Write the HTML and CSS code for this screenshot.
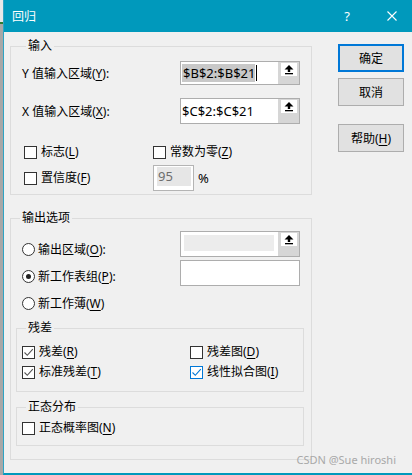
FILE: index.html
```html
<!DOCTYPE html>
<html lang="zh">
<head>
    <meta charset="UTF-8">
    <title>回归</title>
    <link rel="stylesheet" href="styles.css">
</head>
<body>
<div class="screen">
    <div class="backdrop"></div>
    <div class="dialog">
        <!-- Title bar -->
        <div class="titlebar">
            <span class="title">回归</span>
            <span class="help">?</span>
            <svg class="close" width="10" height="10" viewBox="0 0 10 10">
                <path d="M0.5 0.5 L9.5 9.5 M9.5 0.5 L0.5 9.5" stroke="#fff" stroke-width="1.1" fill="none"/>
            </svg>
        </div>

        <div class="content">
            <div class="groups">
                <!-- 输入 -->
                <fieldset class="group input-group">
                    <legend>输入</legend>
                    <div class="field-row first">
                        <span class="label">Y 值输入区域(<u>Y</u>):</span>
                        <div class="ref-box">
                            <div class="ref-field"><span class="selected">$B$2:$B$21</span><span class="caret"></span></div>
                            <div class="ref-btn"><span class="ref-icon"><svg width="16" height="13" viewBox="0 0 16 13"><path d="M8 2 L3.5 6.5 H6.8 V9 H9.2 V6.5 H12.5 Z" fill="#000"/><rect x="4" y="10" width="8" height="1.3" fill="#000"/></svg></span></div>
                        </div>
                    </div>
                    <div class="field-row second">
                        <span class="label">X 值输入区域(<u>X</u>):</span>
                        <div class="ref-box tall">
                            <div class="ref-field">$C$2:$C$21</div>
                            <div class="ref-btn"><span class="ref-icon"><svg width="16" height="13" viewBox="0 0 16 13"><path d="M8 2 L3.5 6.5 H6.8 V9 H9.2 V6.5 H12.5 Z" fill="#000"/><rect x="4" y="10" width="8" height="1.3" fill="#000"/></svg></span></div>
                        </div>
                    </div>
                    <div class="check-grid">
                        <div class="check-row"><span class="box"></span>标志(<u>L</u>)</div>
                        <div class="check-row"><span class="box"></span>常数为零(<u>Z</u>)</div>
                        <div class="check-row conf"><span class="box"></span>置信度(<u>F</u>)</div>
                        <div class="conf-value">
                            <div class="num-box"><span>95</span></div>
                            <span class="pct">%</span>
                        </div>
                    </div>
                </fieldset>

                <!-- 输出选项 -->
                <fieldset class="group output-group">
                    <legend>输出选项</legend>
                    <div class="out-row row-a">
                        <div class="radio-row"><span class="radio"></span>输出区域(<u>O</u>):</div>
                        <div class="ref-box tall disabled">
                            <div class="ref-field"><div class="gray-fill"></div></div>
                            <div class="ref-btn"><span class="ref-icon"><svg width="16" height="13" viewBox="0 0 16 13"><path d="M8 2 L3.5 6.5 H6.8 V9 H9.2 V6.5 H12.5 Z" fill="#000"/><rect x="4" y="10" width="8" height="1.3" fill="#000"/></svg></span></div>
                        </div>
                    </div>
                    <div class="out-row row-b">
                        <div class="radio-row"><span class="radio on"></span>新工作表组(<u>P</u>):</div>
                        <div class="plain-box"></div>
                    </div>
                    <div class="out-row row-c">
                        <div class="radio-row"><span class="radio"></span>新工作薄(<u>W</u>)</div>
                    </div>

                    <fieldset class="group sub-group resid">
                        <legend>残差</legend>
                        <div class="sub-grid">
                            <div class="check-row"><span class="box checked"><svg width="11" height="11" viewBox="0 0 11 11"><path d="M1.5 5.5 L4.3 8.3 L9.8 2.2" stroke="#555" stroke-width="1.1" fill="none"/></svg></span>残差(<u>R</u>)</div>
                            <div class="check-row"><span class="box"></span>残差图(<u>D</u>)</div>
                            <div class="check-row"><span class="box checked"><svg width="11" height="11" viewBox="0 0 11 11"><path d="M1.5 5.5 L4.3 8.3 L9.8 2.2" stroke="#555" stroke-width="1.1" fill="none"/></svg></span>标准残差(<u>T</u>)</div>
                            <div class="check-row"><span class="box checked blue"><svg width="11" height="11" viewBox="0 0 11 11"><path d="M1.5 5.5 L4.3 8.3 L9.8 2.2" stroke="#0078d7" stroke-width="1.1" fill="none"/></svg></span>线性拟合图(<u>I</u>)</div>
                        </div>
                    </fieldset>

                    <fieldset class="group sub-group normal">
                        <legend>正态分布</legend>
                        <div class="check-row"><span class="box"></span>正态概率图(<u>N</u>)</div>
                    </fieldset>
                </fieldset>
            </div>

            <!-- 按钮 -->
            <div class="actions">
                <button class="btn default">确定</button>
                <button class="btn">取消</button>
                <button class="btn help-btn">帮助(<u>H</u>)</button>
            </div>
        </div>

        <div class="watermark">CSDN @Sue hiroshi</div>
    </div>
</div>
</body>
</html>
```

FILE: styles.css
```css
* {
    box-sizing: border-box;
}
body {
    margin: 0;
    background: #f0f0f0;
    font-family: "Noto Sans", "Noto Sans CJK SC", sans-serif;
    font-size: 12px;
    color: #000;
    overflow: hidden;
}
u {
    text-decoration-thickness: 1px;
    text-underline-offset: 2px;
}
.screen {
    display: flex;
    width: 412px;
    height: 475px;
}
.backdrop {
    width: 3px;
    background: linear-gradient(#e8e8e8 0, #e8e8e8 22px, #2e7d32 22px, #2e7d32 24px, #a8a8a8 24px);
}
.dialog {
    position: relative;
    flex: 1;
    display: flex;
    flex-direction: column;
    background: #f0f0f0;
    border-left: 1px solid #2ea4c4;
    border-bottom: 2px solid #0099bc;
}

/* title bar */
.titlebar {
    height: 32px;
    flex-shrink: 0;
    display: flex;
    align-items: center;
    padding-left: 8px;
    padding-right: 15px;
    background: #0099bc;
    color: #fff;
}
.title {
    flex: 1;
    font-size: 12px;
}
.help {
    width: 12px;
    text-align: center;
    font-size: 13px;
    margin-right: 34px;
}

/* body */
.content {
    display: flex;
    padding: 6px 0 0 6px;
}
.groups {
    width: 302px;
    display: flex;
    flex-direction: column;
    gap: 15px;
}
.group {
    margin: 0;
    padding: 0;
    border: 1px solid #dcdcdc;
    min-inline-size: 0;
}
.group legend {
    margin-left: 4px;
    padding: 0 2px;
    line-height: 16px;
}

/* 输入 */
.input-group {
    padding: 0 0 3px 11px;
}
.field-row {
    display: grid;
    grid-template-columns: 158px 120px;
    align-items: center;
}
.field-row.first {
    margin-top: 7px;
}
.field-row.second {
    margin-top: 13px;
}
.ref-box {
    display: flex;
    height: 24px;
    border: 1px solid #adadad;
    background: #fff;
}
.ref-box.tall {
    height: 26px;
}
.ref-field {
    flex: 1;
    display: flex;
    align-items: center;
    padding-left: 1px;
    font-size: 13px;
}
.selected {
    background: #c8c8c8;
    padding-left: 1px;
}
.caret {
    width: 1px;
    height: 16px;
    background: #000;
    margin-left: 1px;
}
.ref-btn {
    width: 21px;
    background: #d6d6d6;
    padding: 1px 2px 0 3px;
}
.ref-icon {
    display: block;
    width: 16px;
    height: 13px;
    background: #fff;
}
.ref-icon svg {
    display: block;
}
.check-grid {
    display: grid;
    grid-template-columns: 129px auto;
    padding-left: 2px;
    margin-top: 20px;
    row-gap: 5px;
    align-items: center;
}
.check-row {
    display: flex;
    align-items: center;
    height: 16px;
    line-height: 16px;
}
.box {
    width: 13px;
    height: 13px;
    border: 1px solid #333;
    background: #fff;
    margin-right: 4px;
    flex-shrink: 0;
}
.box svg {
    display: block;
}
.box.blue {
    border-color: #0078d7;
}
.conf-value {
    display: flex;
    align-items: center;
    height: 26px;
}
.num-box {
    width: 41px;
    height: 26px;
    border: 1px solid #b4b4b4;
    background: #fff;
    padding: 1px 2px 4px 3px;
}
.num-box span {
    display: block;
    height: 100%;
    background: #e6e6e6;
    color: #6d6d6d;
    font-size: 13px;
    line-height: 18px;
    padding-left: 1px;
}
.pct {
    margin-left: 4px;
    font-size: 13px;
}

/* 输出选项 */
.output-group {
    padding: 0 0 13px 5px;
}
.out-row {
    display: grid;
    grid-template-columns: 164px 120px;
    align-items: start;
}
.out-row.row-a {
    margin-top: 5px;
}
.out-row.row-a .radio-row {
    margin-top: 10px;
}
.out-row.row-b {
    margin-top: 3px;
}
.out-row.row-b .radio-row {
    margin-top: 8px;
}
.out-row.row-c {
    margin-top: 9px;
}
.radio-row {
    display: flex;
    align-items: center;
    height: 16px;
    padding-left: 6px;
}
.radio {
    width: 13px;
    height: 13px;
    border: 1px solid #333;
    border-radius: 50%;
    background: #fff;
    margin-right: 3px;
    display: flex;
    align-items: center;
    justify-content: center;
}
.radio.on::after {
    content: "";
    width: 5px;
    height: 5px;
    border-radius: 50%;
    background: #222;
}
.ref-box.disabled .ref-field {
    padding: 3px 4px 5px 3px;
}
.gray-fill {
    width: 100%;
    height: 100%;
    background: #ececec;
}
.plain-box {
    height: 26px;
    border: 1px solid #adadad;
    background: #fff;
}

/* 残差 / 正态分布 */
.sub-group {
    width: 288px;
}
.resid {
    margin-top: 9px;
    padding: 0 0 11px 5px;
}
.sub-grid {
    display: grid;
    grid-template-columns: 168px auto;
    row-gap: 4px;
    margin-top: 8px;
}
.normal {
    margin-top: 7px;
    padding: 0 0 9px 5px;
}
.normal .check-row {
    margin-top: 5px;
}

/* buttons */
.actions {
    display: flex;
    flex-direction: column;
    width: 66px;
    margin-left: 26px;
    margin-top: 6px;
}
.btn {
    height: 28px;
    margin: 0 0 6px 0;
    padding: 0;
    border: 1px solid #adadad;
    background: #e1e1e1;
    font-family: inherit;
    font-size: 12px;
    color: #000;
}
.btn.default {
    border: 2px solid #0078d7;
}
.btn.help-btn {
    margin-top: 12px;
}
.watermark {
    position: absolute;
    right: 16px;
    bottom: 5px;
    line-height: 16px;
    color: #a8a8a8;
    font-size: 11px;
}
```
